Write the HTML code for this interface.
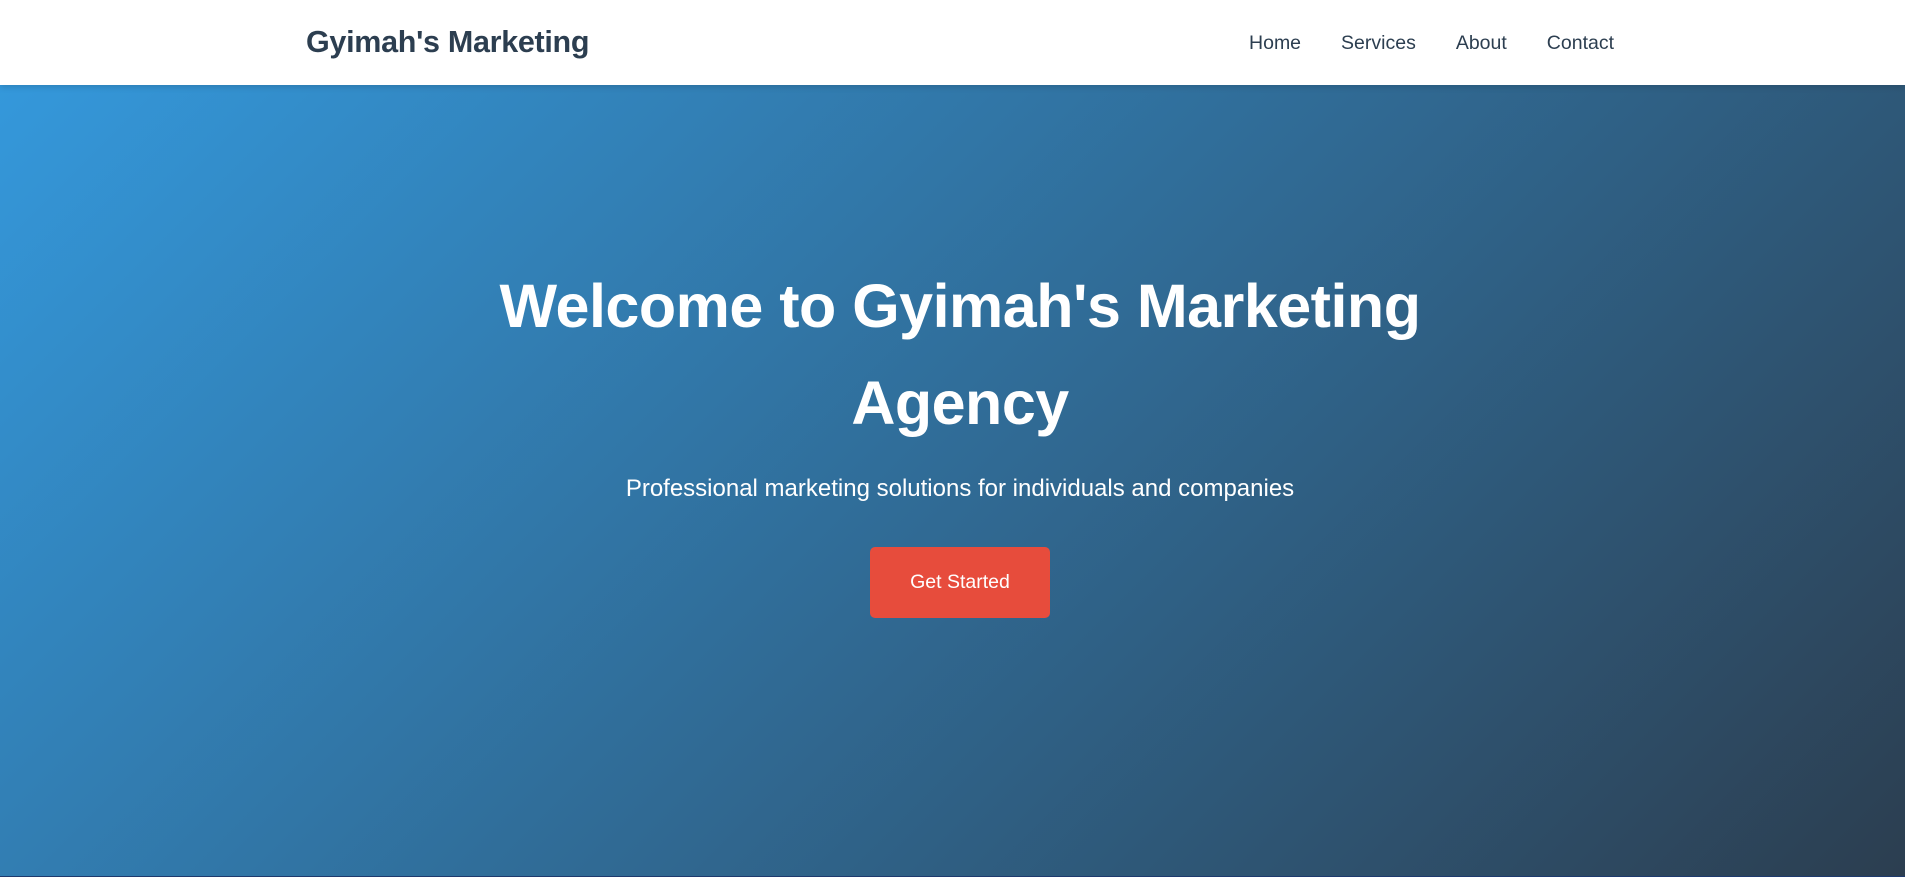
<!DOCTYPE html>
<html><head><meta charset="utf-8"><style>
*{margin:0;padding:0;box-sizing:border-box}
html,body{width:1905px;height:878px;overflow:hidden;font-family:"Liberation Sans",sans-serif}
nav{position:absolute;left:0;top:0;width:1905px;height:85px;background:#fff;box-shadow:0 2px 6px rgba(0,0,0,.15);z-index:2}
.logo{position:absolute;left:306px;top:25px;font-size:30.5px;font-weight:bold;color:#2c3e50;letter-spacing:-0.3px}
.links{position:absolute;right:291px;top:32px;font-size:19.5px;color:#2c3e50}
.links span{margin-left:40px}
.hero{position:absolute;left:0;top:85px;width:1905px;height:792px;background:linear-gradient(135deg,#3498db 0%,#2c3e50 100%);border-bottom:1px solid #1e3a6e}
h1{position:absolute;left:0;width:1920px;text-align:center;top:258px;color:#fff;font-size:61px;line-height:97px;font-weight:bold;letter-spacing:-0.5px}
p{position:absolute;left:0;width:1920px;text-align:center;top:475px;color:#fff;font-size:24px}
.btn{position:absolute;left:870px;top:547px;width:180px;height:71px;background:#e74c3c;border-radius:5px;color:#fff;font-size:19.5px;text-align:center;line-height:71px}
</style></head><body>
<nav><div class="logo">Gyimah's Marketing</div><div class="links"><span>Home</span><span>Services</span><span>About</span><span>Contact</span></div></nav>
<div class="hero"></div>
<h1>Welcome to Gyimah's Marketing<br>Agency</h1>
<p>Professional marketing solutions for individuals and companies</p>
<div class="btn">Get Started</div>
</body></html>
